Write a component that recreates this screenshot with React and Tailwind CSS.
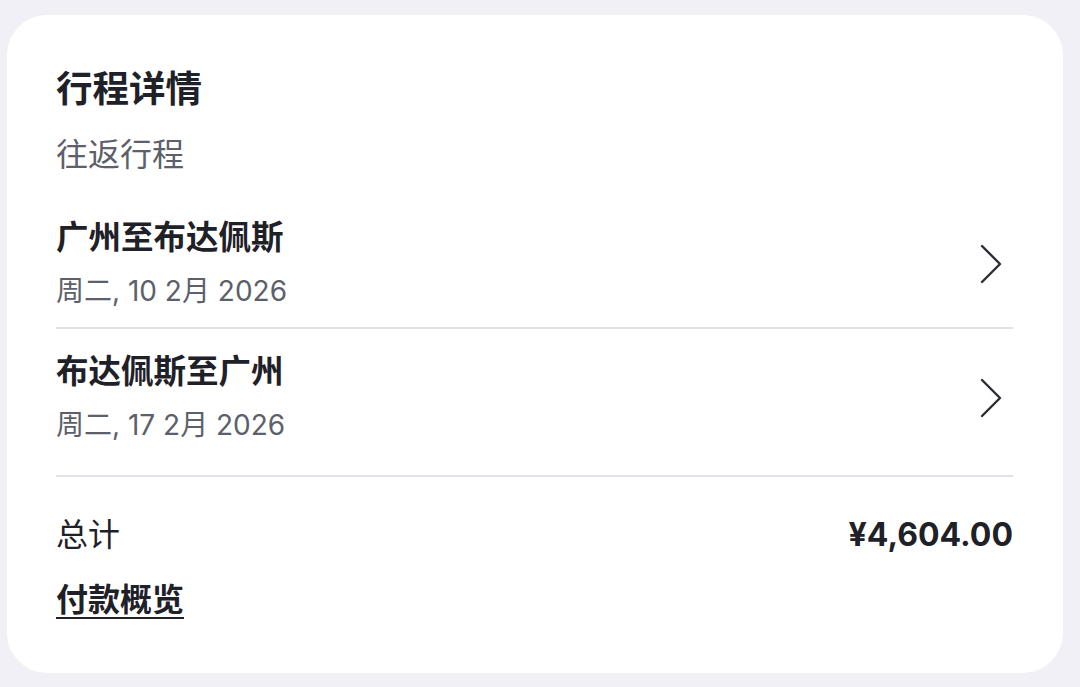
import React from "react";

function Chevron() {
  return (
    <svg width="24" height="40" viewBox="0 0 24 40" fill="none" className="shrink-0">
      <path d="M3 2 L21 20 L3 38" stroke="#2a2d34" strokeWidth="2.4" strokeLinecap="round" strokeLinejoin="round" />
    </svg>
  );
}

function Row({ title, date, pt, pb }) {
  return (
    <div className={`flex items-center justify-between ${pt} ${pb}`}>
      <div className="flex flex-col">
        <div className="text-[32.5px] leading-[40px] font-semibold text-[#1f2128]">{title}</div>
        <div className="mt-[15px] text-[28px] leading-[36px] text-[#5b606a]">{date}</div>
      </div>
      <div className="mr-[10px]">
        <Chevron />
      </div>
    </div>
  );
}

export default function App() {
  return (
    <div
      className="w-[1080px] h-[687px] bg-[#f0f0f6] pt-[15px] pl-[7px] overflow-hidden"
      style={{ fontFamily: "Inter, 'Noto Sans CJK SC', sans-serif" }}
    >
      <div className="w-[1056px] h-[658px] bg-white rounded-[40px] pl-[49px] pr-[50px] pt-[52px]">
        <div className="text-[36.5px] leading-[44px] font-semibold text-[#1f2128]">行程详情</div>
        <div className="mt-[24px] text-[32px] leading-[40px] text-[#5b606a]">往返行程</div>
        <Row title="广州至布达佩斯" date="周二, 10 2月 2026" pt="pt-[43px]" pb="pb-[18px]" />
        <div className="h-[2px] bg-[#e1e2e8]" />
        <Row title="布达佩斯至广州" date="周二, 17 2月 2026" pt="pt-[23px]" pb="pb-[32px]" />
        <div className="h-[2px] bg-[#e1e2e8]" />
        <div className="flex items-center justify-between pt-[38px]">
          <div className="text-[32px] leading-[40px] text-[#1f2128]">总计</div>
          <div className="text-[32px] leading-[40px] font-bold text-[#1f2128]">¥4,604.00</div>
        </div>
        <div className="mt-[25px] text-[32px] leading-[40px] font-bold text-[#1f2128] underline underline-offset-[6px] decoration-[2px]">
          付款概览
        </div>
      </div>
    </div>
  );
}
